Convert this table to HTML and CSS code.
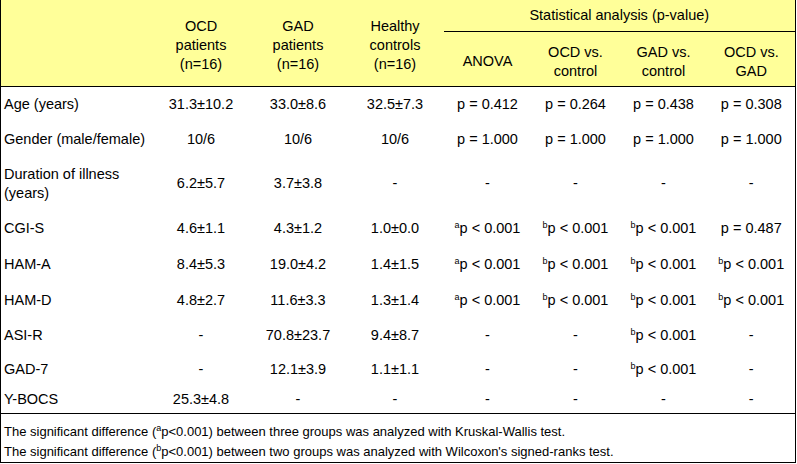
FILE: index.html
```html
<!DOCTYPE html>
<html>
<head>
<meta charset="utf-8">
<link rel="stylesheet" href="styles.css">
</head>
<body>
<table class="tbl">
  <colgroup>
    <col class="c-label">
    <col class="c-grp"><col class="c-grp"><col class="c-grp">
    <col class="c-stat"><col class="c-stat"><col class="c-stat"><col class="c-stat">
  </colgroup>
  <thead>
    <tr class="h1">
      <th rowspan="2" class="grp"></th>
      <th rowspan="2" class="grp">OCD<br>patients<br>(n=16)</th>
      <th rowspan="2" class="grp">GAD<br>patients<br>(n=16)</th>
      <th rowspan="2" class="grp">Healthy<br>controls<br>(n=16)</th>
      <th colspan="4" class="stat-title">Statistical analysis (p-value)</th>
    </tr>
    <tr class="h2">
      <th class="sub">ANOVA</th>
      <th class="sub">OCD vs.<br>control</th>
      <th class="sub">GAD vs.<br>control</th>
      <th class="sub">OCD vs.<br>GAD</th>
    </tr>
  </thead>
  <tbody>
    <tr class="r35">
      <td class="lbl">Age (years)</td><td>31.3±10.2</td><td>33.0±8.6</td><td>32.5±7.3</td>
      <td>p = 0.412</td><td>p = 0.264</td><td>p = 0.438</td><td>p = 0.308</td>
    </tr>
    <tr class="r35">
      <td class="lbl">Gender (male/female)</td><td>10/6</td><td>10/6</td><td>10/6</td>
      <td>p = 1.000</td><td>p = 1.000</td><td>p = 1.000</td><td>p = 1.000</td>
    </tr>
    <tr class="r54">
      <td class="lbl">Duration of illness<br>(years)</td><td>6.2±5.7</td><td>3.7±3.8</td><td>-</td>
      <td>-</td><td>-</td><td>-</td><td>-</td>
    </tr>
    <tr class="r36">
      <td class="lbl">CGI-S</td><td>4.6±1.1</td><td>4.3±1.2</td><td>1.0±0.0</td>
      <td><sup>a</sup>p &lt; 0.001</td><td><sup>b</sup>p &lt; 0.001</td><td><sup>b</sup>p &lt; 0.001</td><td>p = 0.487</td>
    </tr>
    <tr class="r36">
      <td class="lbl">HAM-A</td><td>8.4±5.3</td><td>19.0±4.2</td><td>1.4±1.5</td>
      <td><sup>a</sup>p &lt; 0.001</td><td><sup>b</sup>p &lt; 0.001</td><td><sup>b</sup>p &lt; 0.001</td><td><sup>b</sup>p &lt; 0.001</td>
    </tr>
    <tr class="r36">
      <td class="lbl">HAM-D</td><td>4.8±2.7</td><td>11.6±3.3</td><td>1.3±1.4</td>
      <td><sup>a</sup>p &lt; 0.001</td><td><sup>b</sup>p &lt; 0.001</td><td><sup>b</sup>p &lt; 0.001</td><td><sup>b</sup>p &lt; 0.001</td>
    </tr>
    <tr class="r34">
      <td class="lbl">ASI-R</td><td>-</td><td>70.8±23.7</td><td>9.4±8.7</td>
      <td>-</td><td>-</td><td><sup>b</sup>p &lt; 0.001</td><td>-</td>
    </tr>
    <tr class="r34">
      <td class="lbl">GAD-7</td><td>-</td><td>12.1±3.9</td><td>1.1±1.1</td>
      <td>-</td><td>-</td><td><sup>b</sup>p &lt; 0.001</td><td>-</td>
    </tr>
    <tr class="r27">
      <td class="lbl">Y-BOCS</td><td>25.3±4.8</td><td>-</td><td>-</td>
      <td>-</td><td>-</td><td>-</td><td>-</td>
    </tr>
  </tbody>
  <tfoot>
    <tr>
      <td colspan="8" class="notes">
        <div class="note">The significant difference (<sup>a</sup>p&lt;0.001) between three groups was analyzed with Kruskal-Wallis test.</div>
        <div class="note">The significant difference (<sup>b</sup>p&lt;0.001) between two groups was analyzed with Wilcoxon's signed-ranks test.</div>
      </td>
    </tr>
  </tfoot>
</table>
</body>
</html>
```
FILE: styles.css
```css
html, body {
  margin: 0;
  padding: 0;
  background: #ffffff;
}

.tbl {
  border-collapse: collapse;
  table-layout: fixed;
  width: 795px;
  font-family: "Liberation Sans", Arial, sans-serif;
  font-size: 14.5px;
  line-height: 19px;
  color: #000;
  border-left: 1px solid #000;
  border-right: 1px solid #000;
  border-bottom: 1px solid #000;
}

.c-label { width: 152px; }
.c-grp { width: 97px; }
.c-stat { width: 88px; }

.tbl th,
.tbl td {
  padding: 0;
  text-align: center;
  vertical-align: middle;
  font-weight: normal;
  white-space: nowrap;
}

.tbl thead th {
  background: #ffff99;
}

.tbl thead th.grp {
  border-bottom: 1px solid #000;
  padding-top: 5px;
}

.tbl thead th.sub {
  border-bottom: 1px solid #000;
  padding-top: 6px;
}

.h1 { height: 31px; }
.h2 { height: 55px; }

.stat-title {
  border-bottom: 1px solid #000;
}

.tbl td {
  padding-top: 1px;
}

.tbl td.lbl {
  text-align: left;
  padding-left: 3px;
}

.r35 { height: 35px; }
.r54 { height: 54px; }
.r36 { height: 36px; }
.r34 { height: 34px; }
.r27 { height: 27px; }

sup {
  font-size: 9px;
  line-height: 0;
  vertical-align: 5px;
}

.tbl tfoot td.notes {
  border-top: 1px solid #000;
  text-align: left;
  padding: 8px 0 0 3px;
  font-size: 13px;
}

.note {
  line-height: 20px;
  height: 20px;
}
```
